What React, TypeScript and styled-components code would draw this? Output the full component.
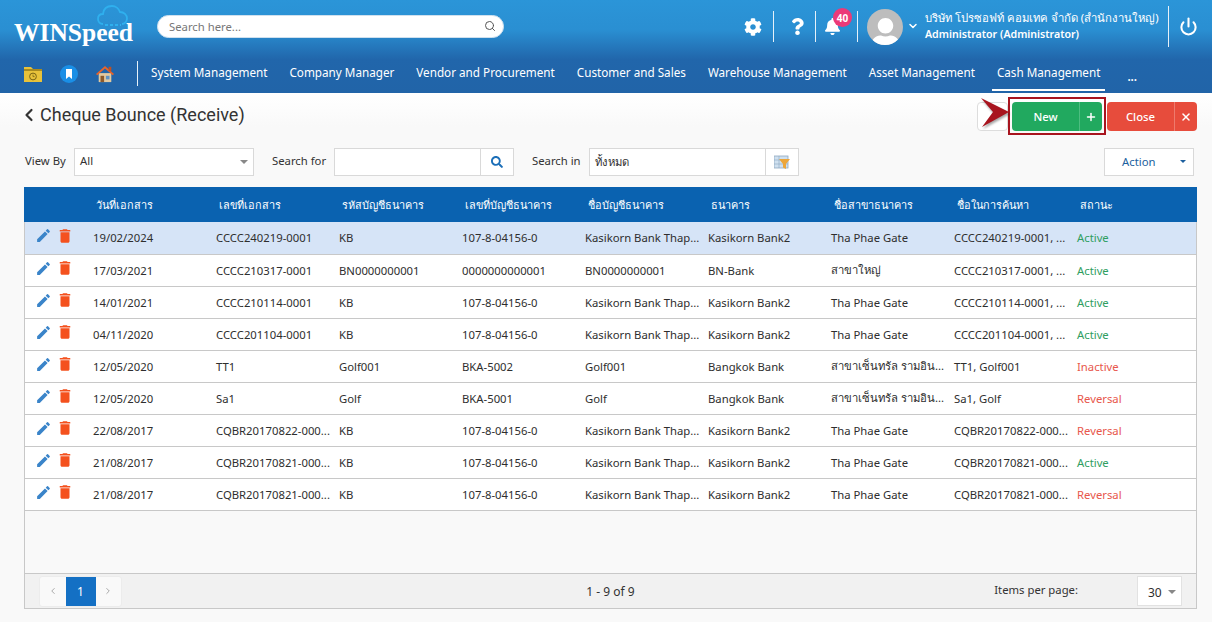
import React from 'react';
import styled, { createGlobalStyle } from 'styled-components';
import { FaCog, FaBell, FaQuestion, FaUser, FaSearch } from 'react-icons/fa';
import { MdEdit, MdDelete } from 'react-icons/md';
import { FiSearch, FiPower, FiChevronLeft, FiChevronRight, FiChevronDown, FiPlus, FiX } from 'react-icons/fi';

const GlobalStyle = createGlobalStyle`
  html, body { margin: 0; padding: 0; background: #f9f9f9; }
  body { font-family: "Noto Sans", "Liberation Sans", sans-serif; font-size: 11.3px; color: #2e2e2e; }
  * { box-sizing: border-box; }
`;

const Page = styled.div`
  width: 1212px;
  height: 622px;
  overflow: hidden;
  display: flex;
  flex-direction: column;
`;

const Header = styled.header`
  height: 93px;
  flex: none;
  background: linear-gradient(180deg, #2b95d8 0%, #2a8fd2 32%, #2166ab 64%, #2164a8 100%);
  display: flex;
  flex-direction: column;
`;

const TopRow = styled.div`
  height: 55px;
  display: flex;
  align-items: flex-start;
  padding-left: 14px;
`;

const Logo = styled.div`
  position: relative;
  width: 143px;
  height: 50px;
  flex: none;
`;

const LogoText = styled.span`
  position: absolute;
  left: 0;
  top: 18px;
  font-family: "Liberation Serif", serif;
  font-weight: 700;
  font-size: 25.5px;
  line-height: 30px;
  color: #fff;
  white-space: nowrap;
`;

const LogoCloud = styled.svg`
  position: absolute;
  left: 83px;
  top: 4px;
`;

const SearchBox = styled.div`
  margin-top: 15px;
  width: 347px;
  height: 23px;
  flex: none;
  background: #fff;
  border: 1px solid #cfe0ee;
  border-radius: 12px;
  display: flex;
  align-items: center;
  justify-content: space-between;
  padding: 0 7px 1px 11px;
  color: #777;
`;

const Tools = styled.div`
  margin-left: auto;
  display: flex;
  align-items: flex-start;
  height: 55px;
`;

const ToolCell = styled.div<{ $w: number; $pad?: string }>`
  position: relative;
  width: ${p => p.$w}px;
  margin-top: 11px;
  height: 31px;
  padding: ${p => p.$pad || '0'};
  display: flex;
  align-items: center;
  justify-content: center;
  color: #fff;
  border-right: 1px solid #e6f1f9;
`;

const Badge = styled.span`
  position: absolute;
  top: -3px;
  left: 17px;
  width: 19px;
  height: 19px;
  border-radius: 50%;
  background: #ec3a78;
  color: #fff;
  font-size: 10px;
  font-weight: 700;
  display: flex;
  align-items: center;
  justify-content: center;
`;

const Avatar = styled.div`
  width: 36px;
  height: 36px;
  margin: 9px 0 0 9px;
  border-radius: 50%;
  background: #bdbdbd;
  color: #fff;
  overflow: hidden;
  display: flex;
  align-items: flex-end;
  justify-content: center;
  flex: none;
`;

const AvatarFigure = styled(FaUser)`
  margin-bottom: -4px;
`;

const Caret = styled.div`
  width: 20px;
  margin-top: 20px;
  color: #fff;
  display: flex;
  justify-content: center;
`;

const UserInfo = styled.div`
  margin: 10px 0 0 2px;
  color: #fff;
  width: 243px;
  height: 36px;
  line-height: 16px;
  white-space: nowrap;
`;

const UserRole = styled.div`
  font-weight: 600;
  font-size: 10.6px;
`;

const PowerCell = styled.div`
  width: 44px;
  height: 41px;
  margin-top: 6px;
  border-left: 1px solid #e6f1f9;
  padding-right: 4px;
  color: #fff;
  display: flex;
  align-items: center;
  justify-content: center;
`;

const NavRow = styled.nav`
  flex: 1;
  display: flex;
  align-items: stretch;
  padding-left: 24px;
`;

const QuickIcons = styled.div`
  display: flex;
  align-items: center;
  gap: 18px;
  width: 114px;
  height: 25px;
  margin-top: 6px;
  border-right: 1px solid #e6f1f9;
`;

const NavList = styled.div`
  display: flex;
  padding-left: 8px;
`;

const NavItem = styled.a<{ $active?: boolean }>`
  height: 36px;
  padding: 7px 5px 0;
  margin-right: 12px;
  color: #fff;
  font-size: 11.7px;
  line-height: 20px;
  white-space: nowrap;
  border-bottom: ${p => (p.$active ? '2px solid #fff' : 'none')};
`;

const NavMore = styled(NavItem)`
  margin-left: 5px;
  padding-top: 11px;
  font-weight: 600;
`;

const TitleBar = styled.div`
  height: 34px;
  flex: none;
  background: linear-gradient(180deg, #fff 0%, #f9f9f9 100%);
  display: flex;
  align-items: flex-start;
  padding-left: 25px;
`;

const Title = styled.h1`
  margin: 9px 0 0;
  font-family: Roboto, sans-serif;
  font-weight: 400;
  font-size: 18px;
  line-height: 26px;
  color: #333;
  display: flex;
  align-items: center;
  gap: 1px;
`;

const BackIcon = styled(FiChevronLeft)`
  margin-left: -6px;
`;

const Actions = styled.div`
  margin-left: auto;
  display: flex;
  align-items: flex-start;
  padding: 9px 15px 0 0;
`;

const Highlight = styled.div`
  position: relative;
  border: 2px solid #a8141e;
  margin: -5px 1px 0 0;
  padding: 3px 2px 2px;
  height: 38px;
`;

const Arrow = styled.svg`
  position: absolute;
  left: -29px;
  top: -1px;
  filter: drop-shadow(1px 2px 1px rgba(0, 0, 0, 0.35));
`;

const GhostBox = styled.div`
  width: 31px;
  height: 29px;
  background: #fff;
  border: 1px solid #ddd;
  border-radius: 4px;
`;

const SplitButton = styled.div<{ $bg: string; $w: number; $line: string }>`
  width: ${p => p.$w}px;
  height: 29px;
  border-radius: 4px;
  background: ${p => p.$bg};
  color: #fff;
  font-weight: 500;
  display: grid;
  grid-template-columns: 1fr 23px;
  align-items: center;
  text-align: center;
  padding-bottom: 1px;
  & > :last-child {
    height: 29px;
    margin-bottom: -1px;
    display: flex;
    align-items: center;
    justify-content: center;
    border-left: 1px solid ${p => p.$line};
  }
`;

const Content = styled.main`
  flex: 1;
  padding: 0 15px 13px 24px;
  display: flex;
  flex-direction: column;
`;

const Filters = styled.div`
  height: 60px;
  flex: none;
  display: flex;
  align-items: flex-start;
  padding: 21px 0 0 1px;
`;

const FilterLabel = styled.span<{ $w: number; $pad?: number }>`
  width: ${p => p.$w}px;
  padding-left: ${p => p.$pad || 0}px;
  flex: none;
  line-height: 26px;
  color: #333;
  white-space: nowrap;
`;

const Field = styled.div<{ $w: number }>`
  width: ${p => p.$w}px;
  height: 28px;
  flex: none;
  background: #fff;
  border: 1px solid #d9d9d9;
  display: flex;
  align-items: center;
  color: #333;
`;

const FieldText = styled.span<{ $raised?: boolean }>`
  flex: 1;
  padding: 0 5px ${p => (p.$raised ? '4px' : '0')};
`;

const FieldButton = styled.span`
  width: 33px;
  height: 100%;
  border-left: 1px solid #d9d9d9;
  display: flex;
  align-items: center;
  justify-content: center;
  color: #1c6fb8;
`;

const DownTriangle = styled.span<{ $gap?: number }>`
  width: 0;
  height: 0;
  margin-right: ${p => p.$gap ?? 5}px;
  border-left: 4px solid transparent;
  border-right: 4px solid transparent;
  border-top: 4px solid #888;
`;

const ActionButton = styled.div`
  margin-left: auto;
  margin-right: 3px;
  width: 90px;
  height: 28px;
  background: #fff;
  border: 1px solid #d9d9d9;
  display: flex;
  align-items: center;
  justify-content: space-between;
  padding: 0 7px 2px 17px;
  color: #1c5f9e;
`;

const ActionTriangle = styled.span`
  width: 0;
  height: 0;
  border-left: 3px solid transparent;
  border-right: 3px solid transparent;
  border-top: 3px solid #1c5f9e;
`;

const Grid = styled.section`
  flex: 1;
  border: 1px solid #c8c8c8;
  border-top: none;
  display: flex;
  flex-direction: column;
`;

const HeadRow = styled.div`
  height: 35px;
  flex: none;
  margin: 0 -1px;
  background: #0a62b0;
  color: #fff;
  display: grid;
  grid-template-columns: 67px repeat(8, 123px) 1fr;
  align-items: center;
`;

const HeadCell = styled.div`
  padding-left: 5px;
  font-size: 10.9px;
  white-space: nowrap;
`;

const Body = styled.div`
  flex: 1;
`;

const Row = styled.div<{ $selected?: boolean }>`
  height: 32px;
  background: ${p => (p.$selected ? '#d6e4f7' : '#fff')};
  border-bottom: 1px solid #c8c8c8;
  display: grid;
  grid-template-columns: 66px repeat(8, 123px) 1fr;
  align-items: center;
  &:first-child {
    height: 33px;
  }
`;

const Cell = styled.div<{ $color?: string }>`
  padding: 0 2px 1px;
  color: ${p => p.$color || '#2e2e2e'};
  white-space: nowrap;
  overflow: hidden;
  text-overflow: ellipsis;
`;

const RowIcons = styled.div`
  display: flex;
  align-items: center;
  padding: 0 0 5px 10px;
  gap: 4px;
`;

const Footer = styled.div`
  height: 35px;
  flex: none;
  background: #f1f1f1;
  border-top: 1px solid #c8c8c8;
  display: grid;
  grid-template-columns: 1fr 1fr 1fr;
  align-items: center;
  padding: 0 14px 0 14px;
`;

const Pager = styled.div`
  display: flex;
  height: 31px;
  width: 83px;
  background: #f9f9f9;
  border: 1px solid #ececec;
  border-radius: 3px;
`;

const PagerArrow = styled.span`
  flex: 1;
  display: flex;
  align-items: center;
  justify-content: center;
  color: #999;
`;

const PagerCurrent = styled.span`
  width: 30px;
  background: #1470c4;
  color: #fff;
  font-size: 12px;
  display: flex;
  align-items: center;
  justify-content: center;
`;

const Range = styled.div`
  text-align: center;
  color: #333;
  font-size: 12px;
`;

const PerPage = styled.div`
  display: flex;
  align-items: center;
  justify-content: flex-end;
`;

const PerPageLabel = styled.span`
  margin-right: 59px;
  padding-bottom: 3px;
  color: #333;
`;

const PerPageSelect = styled.div`
  width: 45px;
  height: 30px;
  background: #fff;
  border: 1px solid #e2e2e2;
  display: flex;
  align-items: center;
  justify-content: space-between;
  padding: 2px 5px 0 10px;
  font-size: 12px;
`;

type RowData = [string, string, string, string, string, string, string, string, string];

const kb = ['KB', '107-8-04156-0', 'Kasikorn Bank Thap...', 'Kasikorn Bank2', 'Tha Phae Gate'];
const central = 'สาขาเซ็นทรัล รามอิน...';

const rows: RowData[] = [
  ['19/02/2024', 'CCCC240219-0001', kb[0], kb[1], kb[2], kb[3], kb[4], 'CCCC240219-0001, ...', 'Active'],
  ['17/03/2021', 'CCCC210317-0001', 'BN0000000001', '0000000000001', 'BN0000000001', 'BN-Bank', 'สาขาใหญ่', 'CCCC210317-0001, ...', 'Active'],
  ['14/01/2021', 'CCCC210114-0001', kb[0], kb[1], kb[2], kb[3], kb[4], 'CCCC210114-0001, ...', 'Active'],
  ['04/11/2020', 'CCCC201104-0001', kb[0], kb[1], kb[2], kb[3], kb[4], 'CCCC201104-0001, ...', 'Active'],
  ['12/05/2020', 'TT1', 'Golf001', 'BKA-5002', 'Golf001', 'Bangkok Bank', central, 'TT1, Golf001', 'Inactive'],
  ['12/05/2020', 'Sa1', 'Golf', 'BKA-5001', 'Golf', 'Bangkok Bank', central, 'Sa1, Golf', 'Reversal'],
  ['22/08/2017', 'CQBR20170822-000...', kb[0], kb[1], kb[2], kb[3], kb[4], 'CQBR20170822-000...', 'Reversal'],
  ['21/08/2017', 'CQBR20170821-000...', kb[0], kb[1], kb[2], kb[3], kb[4], 'CQBR20170821-000...', 'Active'],
  ['21/08/2017', 'CQBR20170821-000...', kb[0], kb[1], kb[2], kb[3], kb[4], 'CQBR20170821-000...', 'Reversal'],
];

const heads = ['วันที่เอกสาร', 'เลขที่เอกสาร', 'รหัสบัญชีธนาคาร', 'เลขที่บัญชีธนาคาร', 'ชื่อบัญชีธนาคาร', 'ธนาคาร', 'ชื่อสาขาธนาคาร', 'ชื่อในการค้นหา', 'สถานะ'];
const menus = ['System Management', 'Company Manager', 'Vendor and Procurement', 'Customer and Sales', 'Warehouse Management', 'Asset Management', 'Cash Management'];

const FolderIcon = () => (
  <svg width="18" height="16" viewBox="0 0 18 16">
    <path d="M0 1h7l2 2h9v13H0z" fill="#e8c23a" />
    <rect x="0" y="3" width="18" height="2" fill="#a88a20" />
    <circle cx="9" cy="10.5" r="3.4" fill="none" stroke="#7a6414" strokeWidth="1" />
    <path d="M9 8.6v2h1.6" fill="none" stroke="#7a6414" strokeWidth="0.8" />
  </svg>
);

const BookmarkIcon = () => (
  <svg width="18" height="18" viewBox="0 0 18 18">
    <circle cx="9" cy="9" r="9" fill="#1a8fe6" />
    <path d="M6 4h6v10l-3-2.4L6 14z" fill="#fff" />
  </svg>
);

const HomeIcon = () => (
  <svg width="18" height="18" viewBox="0 0 20 20">
    <path d="M3 9h14v10H3z" fill="#e2c9a0" />
    <path d="M10 1L0 10l1.4 1.4L10 4l8.6 7.4L20 10z" fill="#e8632a" />
    <rect x="14" y="2" width="3" height="5" fill="#c2501f" />
    <rect x="5" y="12" width="4" height="7" fill="#8d5a2b" />
    <rect x="11" y="12" width="4" height="4" fill="#5f93c4" />
  </svg>
);

const FilterGridIcon = () => (
  <svg width="16" height="15" viewBox="0 0 16 15">
    <rect x="0" y="1" width="14" height="12" fill="#cfe0ef" stroke="#8fa9c0" strokeWidth="0.8" />
    <path d="M0 5h14M0 9h14M5 1v12" stroke="#8fa9c0" strokeWidth="0.6" />
    <path d="M5 4h11l-4 5v5l-3-1.4V9z" fill="#eda63a" />
  </svg>
);

export default function App() {
  return (
    <Page>
      <GlobalStyle />
      <Header>
        <TopRow>
          <Logo>
            <LogoCloud width="32" height="24" viewBox="0 0 32 24" fill="none" stroke="#2fb0ee" strokeWidth="1.8">
              <path d="M6 20c-3 0-5-2-5-5s2-5 5-5c.5-5 4-8 9-8 4 0 7 3 8 6 4 0 7 3 7 6.5 0 3-2.5 5.5-5 5.5" />
              <path d="M8 21h16" strokeDasharray="3 2" />
            </LogoCloud>
            <LogoText>WINSpeed</LogoText>
          </Logo>
          <SearchBox>
            <span>Search here...</span>
            <FiSearch size={12} color="#555" />
          </SearchBox>
          <Tools>
            <ToolCell $w={41}><FaCog size={18} /></ToolCell>
            <ToolCell $w={42} $pad="0 0 0 5px"><FaQuestion size={17} /></ToolCell>
            <ToolCell $w={42} $pad="0 8px 0 0">
              <FaBell size={17} />
              <Badge>40</Badge>
            </ToolCell>
            <Avatar><AvatarFigure size={31} /></Avatar>
            <Caret><FiChevronDown size={12} strokeWidth={3} /></Caret>
            <UserInfo>
              <div>บริษัท โปรซอฟท์ คอมเทค จำกัด (สำนักงานใหญ่)</div>
              <UserRole>Administrator (Administrator)</UserRole>
            </UserInfo>
            <PowerCell><FiPower size={19} strokeWidth={2.6} /></PowerCell>
          </Tools>
        </TopRow>
        <NavRow>
          <QuickIcons>
            <FolderIcon />
            <BookmarkIcon />
            <HomeIcon />
          </QuickIcons>
          <NavList>
            {menus.map(m => (
              <NavItem key={m} $active={m === 'Cash Management'}>{m}</NavItem>
            ))}
            <NavMore>...</NavMore>
          </NavList>
        </NavRow>
      </Header>

      <TitleBar>
        <Title><BackIcon size={20} strokeWidth={2.6} />Cheque Bounce (Receive)</Title>
        <Actions>
          <GhostBox />
          <Highlight>
            <Arrow width="28" height="29" viewBox="0 0 28 29">
              <path d="M0 0l28 14L1 29l11-15z" fill="#a8141e" />
            </Arrow>
            <SplitButton $bg="#21a95f" $w={90} $line="#4dbd80">
              <span>New</span>
              <span><FiPlus size={12} strokeWidth={3} /></span>
            </SplitButton>
          </Highlight>
          <SplitButton $bg="#e74c3c" $w={90} $line="#ee7a6d">
            <span>Close</span>
            <span><FiX size={12} strokeWidth={3} /></span>
          </SplitButton>
        </Actions>
      </TitleBar>

      <Content>
        <Filters>
          <FilterLabel $w={49}>View By</FilterLabel>
          <Field $w={180}>
            <FieldText $raised>All</FieldText>
            <DownTriangle />
          </Field>
          <FilterLabel $w={80} $pad={18}>Search for</FilterLabel>
          <Field $w={180}>
            <FieldText />
            <FieldButton><FaSearch size={12} /></FieldButton>
          </Field>
          <FilterLabel $w={75} $pad={18}>Search in</FilterLabel>
          <Field $w={210}>
            <FieldText>ทั้งหมด</FieldText>
            <FieldButton><FilterGridIcon /></FieldButton>
          </Field>
          <ActionButton>
            Action
            <ActionTriangle />
          </ActionButton>
        </Filters>
        <Grid>
          <HeadRow>
            <span />
            {heads.map(h => <HeadCell key={h}>{h}</HeadCell>)}
          </HeadRow>
          <Body>
            {rows.map((r, i) => (
              <Row key={i} $selected={i === 0}>
                <RowIcons>
                  <MdEdit size={17} color="#3a84c9" />
                  <MdDelete size={18} color="#f4511e" />
                </RowIcons>
                {r.slice(0, 8).map((c, j) => <Cell key={j}>{c}</Cell>)}
                <Cell $color={r[8] === 'Active' ? '#2f9e5f' : '#e8574c'}>{r[8]}</Cell>
              </Row>
            ))}
          </Body>
          <Footer>
            <Pager>
              <PagerArrow><FiChevronLeft size={10} /></PagerArrow>
              <PagerCurrent>1</PagerCurrent>
              <PagerArrow><FiChevronRight size={10} /></PagerArrow>
            </Pager>
            <Range>1 - 9 of 9</Range>
            <PerPage>
              <PerPageLabel>Items per page:</PerPageLabel>
              <PerPageSelect>
                30
                <DownTriangle $gap={0} />
              </PerPageSelect>
            </PerPage>
          </Footer>
        </Grid>
      </Content>
    </Page>
  );
}
